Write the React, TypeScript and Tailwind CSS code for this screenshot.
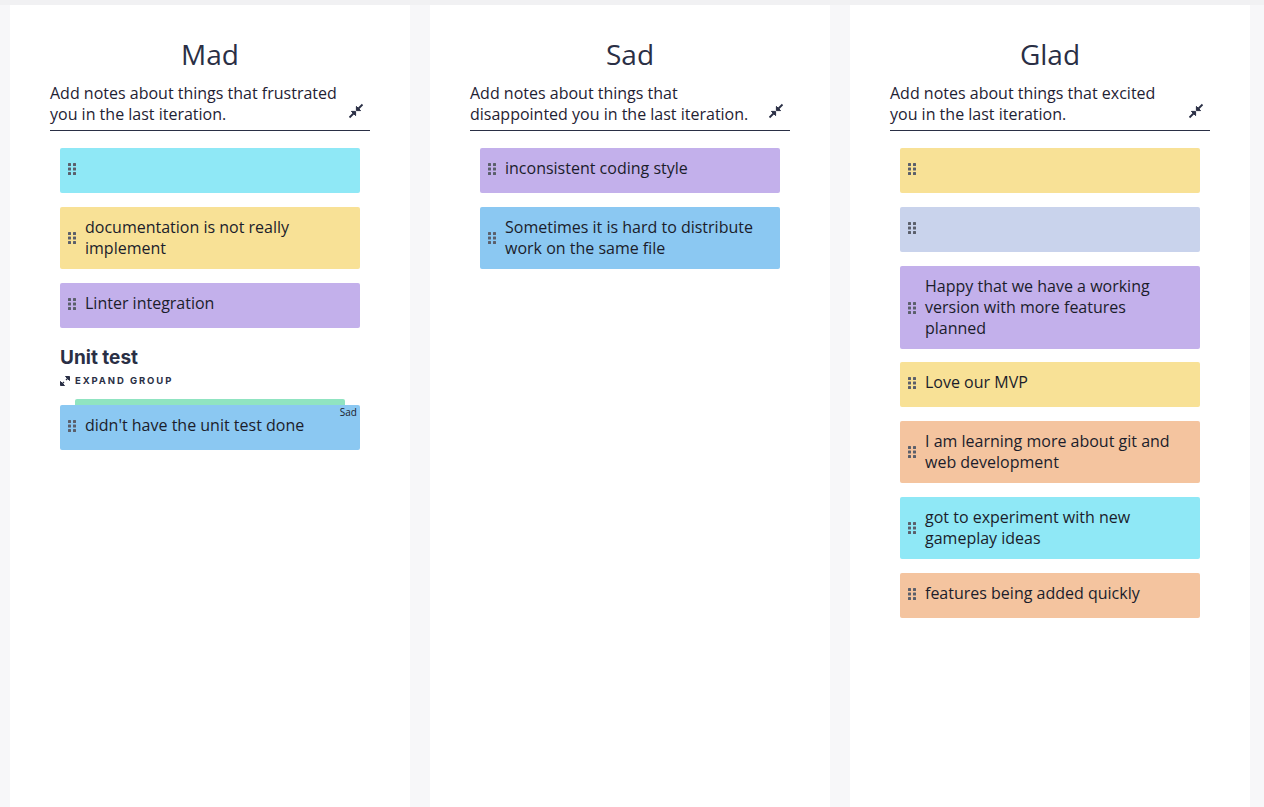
import React from 'react';

type Note = { text: string; color: string };

const DragHandle: React.FC = () => (
  <svg width="8" height="12" viewBox="0 0 8 12" className="shrink-0">
    {[0, 4.5, 9].map((y) => (
      <g key={y} fill="#5b5f6b">
        <rect x="0" y={y} width="3" height="3" rx="0.5" />
        <rect x="5" y={y} width="3" height="3" rx="0.5" />
      </g>
    ))}
  </svg>
);

const CompressIcon: React.FC = () => (
  <svg width="16" height="16" viewBox="0 0 16 16" fill="#2a2f45" stroke="#2a2f45">
    <path d="M14.5 1.5 L10 6" strokeWidth="1.8" />
    <path d="M8.4 3.4 L8.4 7.6 L12.6 7.6 Z" />
    <path d="M1.5 14.5 L6 10" strokeWidth="1.8" />
    <path d="M7.6 12.6 L7.6 8.4 L3.4 8.4 Z" />
  </svg>
);

const ExpandIcon: React.FC = () => (
  <svg width="10" height="10" viewBox="0 0 10 10" fill="#2a2f45" stroke="#2a2f45">
    <path d="M1 9 L4 6" strokeWidth="1.3" />
    <path d="M0.5 5.5 L0.5 9.5 L4.5 9.5 Z" />
    <path d="M9 1 L6 4" strokeWidth="1.3" />
    <path d="M9.5 4.5 L9.5 0.5 L5.5 0.5 Z" />
  </svg>
);

const NoteCard: React.FC<{ note: Note; tag?: string }> = ({ note, tag }) => (
  <div className={`relative min-h-[45px] py-[10px] pl-[8px] pr-[12px] rounded-[2px] ${note.color}`}>
    <div className="flex items-center gap-[9px] min-h-[21px]">
      <DragHandle />
      <p className="text-[16px] leading-[21px] text-[#1b1d2b]">{note.text}</p>
    </div>
    {tag && (
      <span className="absolute top-[1px] right-[3px] text-[10px] leading-[12px] text-[#1b1d2b]">
        {tag}
      </span>
    )}
  </div>
);

const cyan = 'bg-[#8fe8f6]';
const yellow = 'bg-[#f8e196]';
const purple = 'bg-[#c3b0eb]';
const blue = 'bg-[#8bc8f2]';
const slate = 'bg-[#c9d3ec]';
const orange = 'bg-[#f4c49f]';

const Column: React.FC<{
  title: string;
  description: string;
  children: React.ReactNode;
}> = ({ title, description, children }) => (
  <div className="w-[400px] shrink-0 bg-white min-h-[802px] pt-[29px] px-[40px]">
    <h2 className="text-center text-[28px] leading-[40px] text-[#2a2f45]">{title}</h2>
    <div className="mt-[9px] flex items-end justify-between border-b border-[#2a2f45] pb-[5px]">
      <p className="w-[296px] text-[16px] leading-[21px] text-[#1f2233]">{description}</p>
      <div className="mb-[6px] mr-[6px]">
        <CompressIcon />
      </div>
    </div>
    <div className="mt-[17px] px-[10px] flex flex-col gap-[14px]">{children}</div>
  </div>
);

const App: React.FC = () => {
  return (
    <div
      className="min-h-screen bg-[#f7f7f9]"
      style={{ fontFamily: '"Open Sans", "Noto Sans", sans-serif' }}
    >
      <div className="h-[5px] bg-[#f1f1f3]" />
      <div className="flex gap-[20px] pl-[10px] overflow-hidden">
        <Column title="Mad" description="Add notes about things that frustrated you in the last iteration.">
          <NoteCard note={{ text: '', color: cyan }} />
          <NoteCard note={{ text: 'documentation is not really implement', color: yellow }} />
          <NoteCard note={{ text: 'Linter integration', color: purple }} />
          <div className="mt-[3px]">
            <h3
              className="text-[19px] leading-[24px] font-bold text-[#2a2f45] translate-y-[1px]"
              style={{ fontFamily: 'Inter, "Noto Sans", sans-serif' }}
            >
              Unit test
            </h3>
            <div className="mt-[6px] flex items-center gap-[5px] h-[12px]">
              <ExpandIcon />
              <span
                className="text-[9.5px] font-bold tracking-[0.2em] text-[#2a2f45]"
                style={{ fontFamily: 'Inter, "Noto Sans", sans-serif' }}
              >
                EXPAND GROUP
              </span>
            </div>
            <div className="mt-[12px] mx-[15px] h-[6px] rounded-t-[2px] bg-[#90e4c1]" />
            <NoteCard note={{ text: "didn't have the unit test done", color: blue }} tag="Sad" />
          </div>
        </Column>
        <Column title="Sad" description="Add notes about things that disappointed you in the last iteration.">
          <NoteCard note={{ text: 'inconsistent coding style', color: purple }} />
          <NoteCard note={{ text: 'Sometimes it is hard to distribute work on the same file', color: blue }} />
        </Column>
        <Column title="Glad" description="Add notes about things that excited you in the last iteration.">
          <NoteCard note={{ text: '', color: yellow }} />
          <NoteCard note={{ text: '', color: slate }} />
          <div className="-mb-[1px]">
            <NoteCard note={{ text: 'Happy that we have a working version with more features planned', color: purple }} />
          </div>
          <NoteCard note={{ text: 'Love our MVP', color: yellow }} />
          <NoteCard note={{ text: 'I am learning more about git and web development', color: orange }} />
          <NoteCard note={{ text: 'got to experiment with new gameplay ideas', color: cyan }} />
          <NoteCard note={{ text: 'features being added quickly', color: orange }} />
        </Column>
      </div>
    </div>
  );
};

export default App;
